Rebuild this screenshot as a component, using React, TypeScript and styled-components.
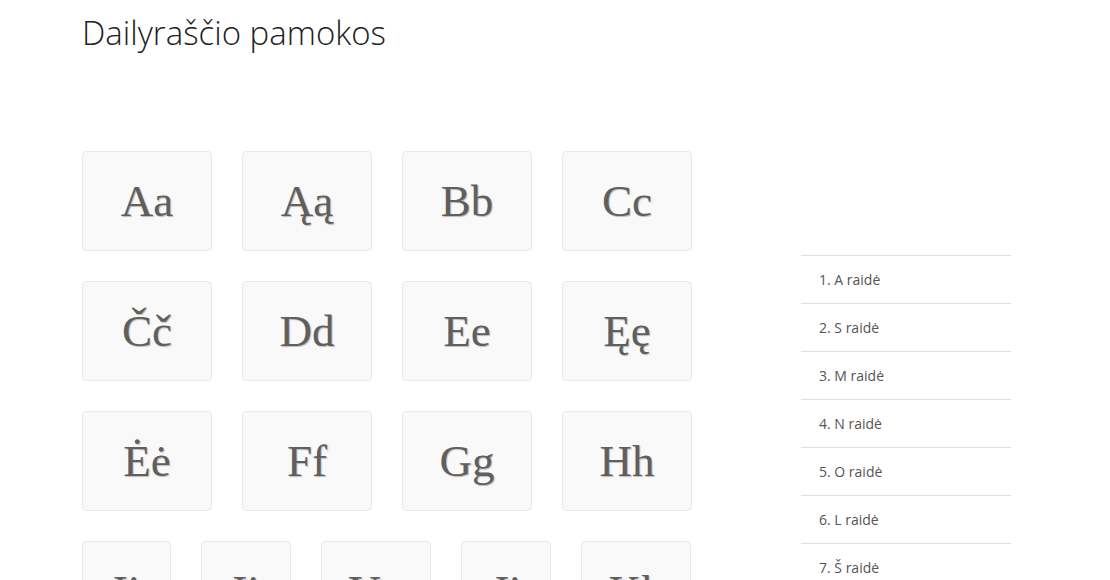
import React from "react";
import styled, { createGlobalStyle } from "styled-components";

const GlobalStyle = createGlobalStyle`
  html, body { margin: 0; padding: 0; background: #fff; }
  body { font-family: "Open Sans", "Liberation Sans", sans-serif; overflow: hidden; }
  * { box-sizing: border-box; }
`;

const Page = styled.div`
  padding: 10px 0 0 82px;
  width: 1110px;
  height: 580px;
  overflow: hidden;
`;

const Title = styled.h1`
  margin: 0;
  font-family: "Open Sans", sans-serif;
  font-weight: 300;
  font-size: 33px;
  line-height: 45px;
  color: #222;
`;

const Content = styled.div`
  display: flex;
  align-items: flex-start;
  margin-top: 96px;
`;

const Main = styled.div`
  width: 610px;
  display: flex;
  flex-direction: column;
  gap: 30px;
`;

const Row = styled.div`
  display: flex;
  gap: 30px;
`;

const Card = styled.div<{ $w: number }>`
  width: ${(p) => p.$w}px;
  height: 100px;
  flex: none;
  display: flex;
  align-items: center;
  justify-content: center;
  background: #f9f9f9;
  border: 1px solid #e9e9e9;
  border-radius: 4px;
  font-family: "Liberation Serif", "Times New Roman", serif;
  font-size: 45px;
  color: #5f5f5f;
  text-shadow: 1px 1px 1px rgba(0, 0, 0, 0.25);
`;

const Sidebar = styled.ul`
  list-style: none;
  margin: 104px 0 0 109px;
  padding: 0;
  width: 210px;
  border-top: 1px solid #e0e0e0;
`;

const Item = styled.li`
  height: 48px;
  display: flex;
  align-items: center;
  padding: 0 0 1px 18px;
  border-bottom: 1px solid #e0e0e0;
  font-size: 14px;
  color: #555;
`;

const rows: [string, number][][] = [
  [["Aa", 130], ["Ąą", 130], ["Bb", 130], ["Cc", 130]],
  [["Čč", 130], ["Dd", 130], ["Ee", 130], ["Ęę", 130]],
  [["Ėė", 130], ["Ff", 130], ["Gg", 130], ["Hh", 130]],
  [["Ii", 89], ["Įį", 90], ["Yy", 110], ["Jj", 90], ["Kk", 110]],
];

const lessons = ["1. A raidė", "2. S raidė", "3. M raidė", "4. N raidė", "5. O raidė", "6. L raidė", "7. Š raidė", "8. T raidė"];

export default function App() {
  return (
    <>
      <GlobalStyle />
      <Page>
        <Title>Dailyraščio pamokos</Title>
        <Content>
          <Main>
            {rows.map((r, i) => (
              <Row key={i}>
                {r.map(([t, w]) => (
                  <Card key={t} $w={w}>{t}</Card>
                ))}
              </Row>
            ))}
          </Main>
          <Sidebar>
            {lessons.map((l) => (
              <Item key={l}>{l}</Item>
            ))}
          </Sidebar>
        </Content>
      </Page>
    </>
  );
}
